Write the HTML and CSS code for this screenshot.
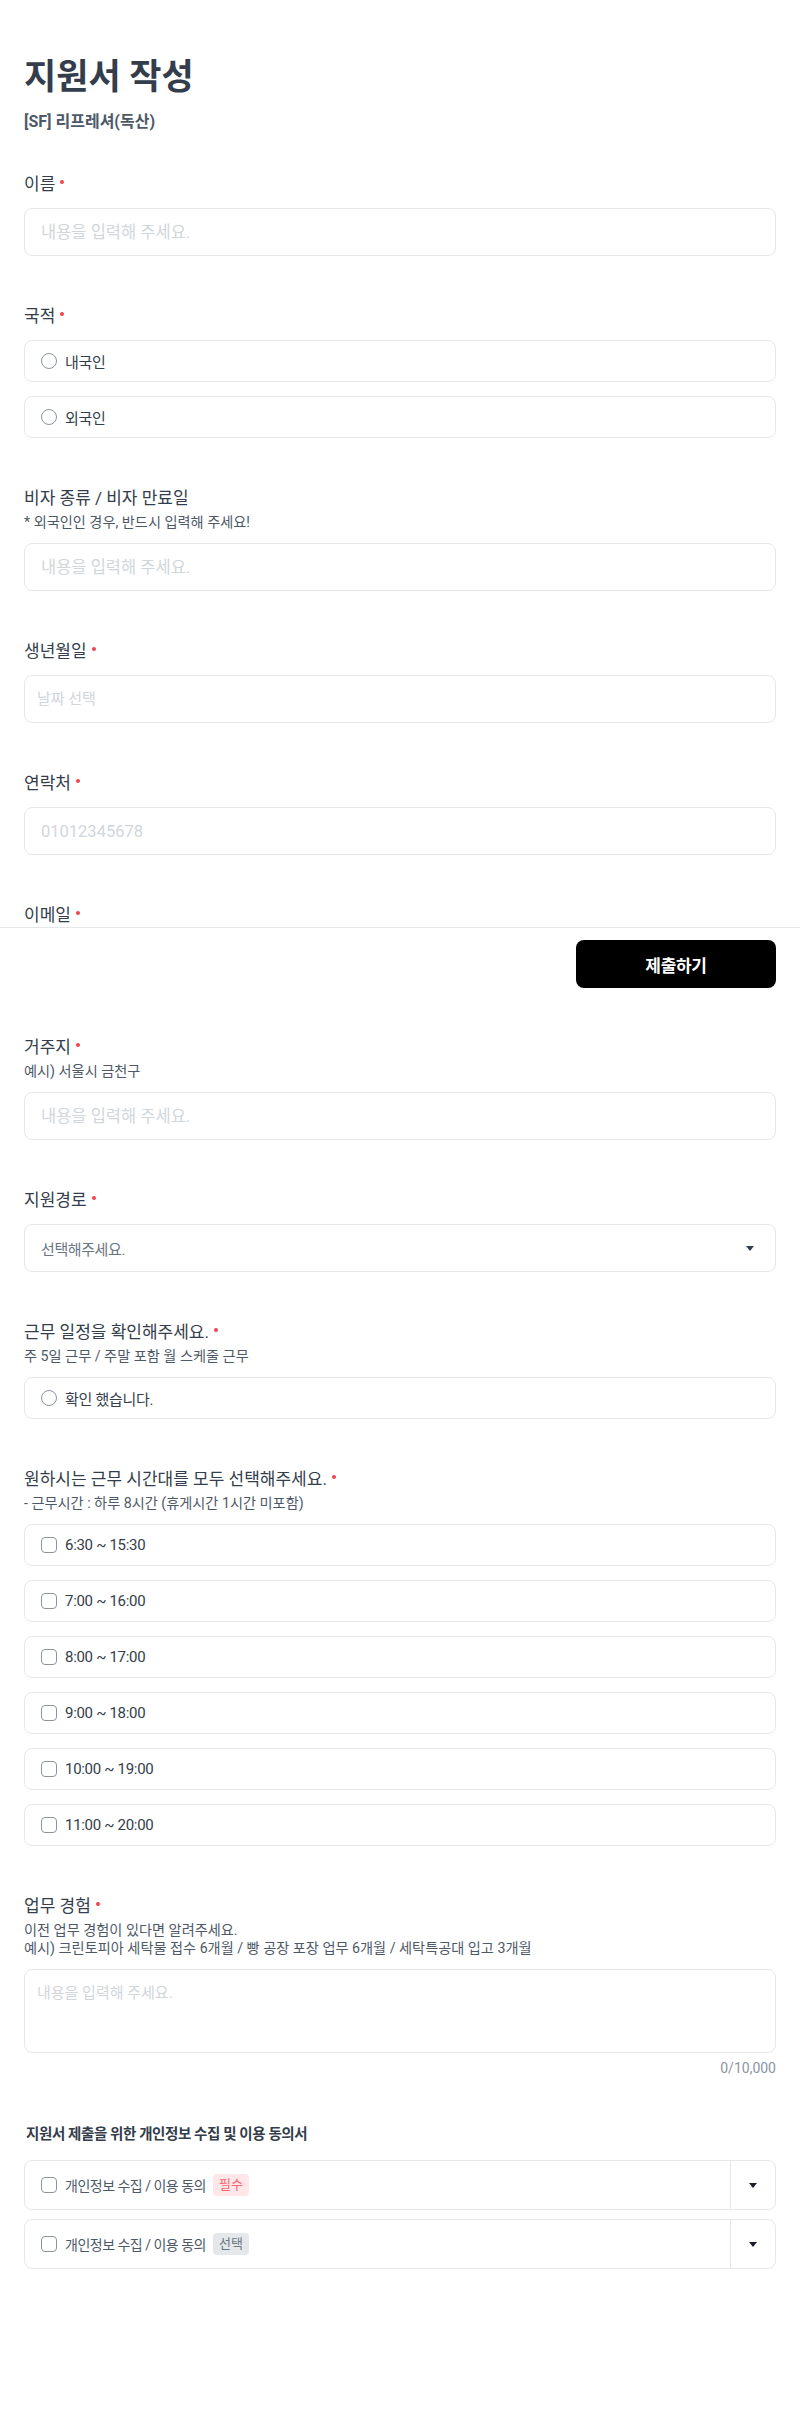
FILE: index.html
```html
<!DOCTYPE html>
<html lang="ko">
<head>
    <meta charset="UTF-8">
    <meta name="viewport" content="width=device-width, initial-scale=1.0">
    <title>지원서 작성</title>
    <link rel="stylesheet" href="styles.css">
</head>
<body>
    <div class="page">
        <header class="page-header">
            <h1 class="page-title">지원서 작성</h1>
            <p class="page-subtitle">[SF] 리프레셔(독산)</p>
        </header>

        <form class="apply-form">
            <div class="field">
                <div class="field-head">
                    <label class="field-label">이름<span class="required"></span></label>
                </div>
                <input type="text" class="text-input" placeholder="내용을 입력해 주세요.">
            </div>

            <div class="field">
                <div class="field-head">
                    <label class="field-label">국적<span class="required"></span></label>
                </div>
                <div class="option-list">
                    <label class="option-item"><span class="radio"></span><span class="option-text">내국인</span></label>
                    <label class="option-item"><span class="radio"></span><span class="option-text">외국인</span></label>
                </div>
            </div>

            <div class="field">
                <div class="field-head">
                    <label class="field-label">비자 종류 / 비자 만료일</label>
                    <p class="field-hint">* 외국인인 경우, 반드시 입력해 주세요!</p>
                </div>
                <input type="text" class="text-input" placeholder="내용을 입력해 주세요.">
            </div>

            <div class="field">
                <div class="field-head">
                    <label class="field-label">생년월일<span class="required"></span></label>
                </div>
                <input type="text" class="text-input date-input" placeholder="날짜 선택">
            </div>

            <div class="field">
                <div class="field-head">
                    <label class="field-label">연락처<span class="required"></span></label>
                </div>
                <input type="text" class="text-input" placeholder="01012345678">
            </div>

            <div class="field">
                <div class="field-head">
                    <label class="field-label">이메일<span class="required"></span></label>
                </div>
                <input type="text" class="text-input" placeholder="내용을 입력해 주세요.">
            </div>

            <div class="field">
                <div class="field-head">
                    <label class="field-label">거주지<span class="required"></span></label>
                    <p class="field-hint">예시) 서울시 금천구</p>
                </div>
                <input type="text" class="text-input" placeholder="내용을 입력해 주세요.">
            </div>

            <div class="field">
                <div class="field-head">
                    <label class="field-label">지원경로<span class="required"></span></label>
                </div>
                <div class="select-box">
                    <span class="select-placeholder">선택해주세요.</span>
                    <svg class="caret" width="8" height="5" viewBox="0 0 8 5"><path d="M0 0h8L4 5z" fill="#333d4b"/></svg>
                </div>
            </div>

            <div class="field">
                <div class="field-head">
                    <label class="field-label">근무 일정을 확인해주세요.<span class="required"></span></label>
                    <p class="field-hint">주 5일 근무 / 주말 포함 월 스케줄 근무</p>
                </div>
                <div class="option-list">
                    <label class="option-item"><span class="radio"></span><span class="option-text">확인 했습니다.</span></label>
                </div>
            </div>

            <div class="field">
                <div class="field-head">
                    <label class="field-label">원하시는 근무 시간대를 모두 선택해주세요.<span class="required"></span></label>
                    <p class="field-hint">- 근무시간 : 하루 8시간 (휴게시간 1시간 미포함)</p>
                </div>
                <div class="option-list">
                    <label class="option-item"><span class="checkbox"></span><span class="option-text">6:30 ~ 15:30</span></label>
                    <label class="option-item"><span class="checkbox"></span><span class="option-text">7:00 ~ 16:00</span></label>
                    <label class="option-item"><span class="checkbox"></span><span class="option-text">8:00 ~ 17:00</span></label>
                    <label class="option-item"><span class="checkbox"></span><span class="option-text">9:00 ~ 18:00</span></label>
                    <label class="option-item"><span class="checkbox"></span><span class="option-text">10:00 ~ 19:00</span></label>
                    <label class="option-item"><span class="checkbox"></span><span class="option-text">11:00 ~ 20:00</span></label>
                </div>
            </div>

            <div class="field">
                <div class="field-head">
                    <label class="field-label">업무 경험<span class="required"></span></label>
                    <p class="field-hint">이전 업무 경험이 있다면 알려주세요.<br>예시) 크린토피아 세탁물 접수 6개월 / 빵 공장 포장 업무 6개월 / 세탁특공대 입고 3개월</p>
                </div>
                <textarea class="text-area" placeholder="내용을 입력해 주세요."></textarea>
                <div class="char-count">0/10,000</div>
            </div>

            <section class="consent-section">
                <h2 class="consent-title">지원서 제출을 위한 개인정보 수집 및 이용 동의서</h2>
                <div class="consent-list">
                    <div class="consent-item">
                        <label class="consent-main">
                            <span class="checkbox"></span>
                            <span class="consent-text">개인정보 수집 / 이용 동의</span>
                            <span class="badge badge-required">필수</span>
                        </label>
                        <button type="button" class="consent-toggle">
                            <svg width="8" height="5" viewBox="0 0 8 5"><path d="M0 0h8L4 5z" fill="#191f28"/></svg>
                        </button>
                    </div>
                    <div class="consent-item">
                        <label class="consent-main">
                            <span class="checkbox"></span>
                            <span class="consent-text">개인정보 수집 / 이용 동의</span>
                            <span class="badge badge-optional">선택</span>
                        </label>
                        <button type="button" class="consent-toggle">
                            <svg width="8" height="5" viewBox="0 0 8 5"><path d="M0 0h8L4 5z" fill="#191f28"/></svg>
                        </button>
                    </div>
                </div>
            </section>
        </form>
    </div>

    <div class="submit-bar">
        <button type="button" class="submit-button">제출하기</button>
    </div>
</body>
</html>
```

FILE: styles.css
```css
* {
    margin: 0;
    padding: 0;
    box-sizing: border-box;
}

body {
    font-family: Roboto, 'Noto Sans CJK KR', sans-serif;
    background: #ffffff;
    color: #333d4b;
    position: relative;
    min-height: 2424px;
}

.page {
    padding: 57px 24px 120px;
}

.page-title {
    font-size: 35px;
    line-height: 42px;
    font-weight: 700;
    color: #333d4b;
}

.page-subtitle {
    margin-top: 11px;
    font-size: 16px;
    line-height: 24px;
    font-weight: 700;
    color: #4e5968;
}

.apply-form {
    margin-top: 38px;
    display: flex;
    flex-direction: column;
    gap: 48px;
}

.field-head {
    margin-bottom: 12px;
}

.field-label {
    display: block;
    font-size: 17px;
    line-height: 24px;
    color: #333d4b;
}

.required {
    display: inline-block;
    width: 4px;
    height: 4px;
    margin-left: 5px;
    margin-top: 8px;
    vertical-align: top;
    border-radius: 50%;
    background: #f04452;
}

.field-hint {
    margin-top: 3px;
    font-size: 14.2px;
    line-height: 18px;
    color: #4e5968;
}

.text-input,
.text-area {
    display: block;
    width: 100%;
    height: 48px;
    padding: 0 16px;
    border: 1px solid #e5e8eb;
    border-radius: 8px;
    background: #ffffff;
    font-family: inherit;
    font-size: 16.5px;
    color: #333d4b;
    outline: none;
}

.text-input::placeholder,
.text-area::placeholder {
    color: #d1d6db;
}

.date-input {
    padding: 0 12px;
    font-size: 15px;
}

.text-area {
    height: 84px;
    padding: 12px;
    font-size: 15px;
    line-height: 22px;
    resize: none;
}

.char-count {
    margin-top: 5px;
    text-align: right;
    font-size: 14px;
    line-height: 20px;
    color: #8b95a1;
}

.select-box {
    display: flex;
    align-items: center;
    justify-content: space-between;
    height: 48px;
    padding: 0 21px 0 16px;
    border: 1px solid #e5e8eb;
    border-radius: 8px;
}

.select-placeholder {
    font-size: 15px;
    color: #6b7684;
    letter-spacing: -0.4px;
}

.option-list {
    display: flex;
    flex-direction: column;
    gap: 14px;
}

.option-item {
    display: flex;
    align-items: center;
    gap: 8px;
    height: 42px;
    padding: 0 16px;
    border: 1px solid #e5e8eb;
    border-radius: 8px;
}

.option-text {
    font-size: 15px;
    color: #333d4b;
    letter-spacing: -0.3px;
}

.radio,
.checkbox {
    flex-shrink: 0;
    width: 16px;
    height: 16px;
    border: 1px solid #8b95a1;
    background: #ffffff;
}

.radio {
    border-radius: 50%;
}

.checkbox {
    border-radius: 4px;
}

.consent-section {
    margin-top: -2px;
}

.consent-title {
    padding-left: 2px;
    font-size: 14.5px;
    line-height: 22px;
    font-weight: 700;
    color: #333d4b;
    letter-spacing: -0.4px;
}

.consent-list {
    margin-top: 14px;
    display: flex;
    flex-direction: column;
    gap: 9px;
}

.consent-item {
    display: flex;
    height: 50px;
    border: 1px solid #e5e8eb;
    border-radius: 8px;
}

.consent-main {
    flex: 1;
    display: flex;
    align-items: center;
    gap: 8px;
    padding: 0 16px;
}

.consent-text {
    font-size: 14px;
    color: #4e5968;
    letter-spacing: -0.5px;
}

.badge {
    margin-left: -1px;
    padding: 0 6px;
    height: 22px;
    line-height: 22px;
    border-radius: 4px;
    font-size: 13px;
}

.badge-required {
    background: #ffe7e9;
    color: #f66570;
}

.badge-optional {
    background: #e5e8eb;
    color: #6b7684;
}

.consent-toggle {
    width: 45px;
    border: none;
    border-left: 1px solid #e5e8eb;
    background: transparent;
    display: flex;
    align-items: center;
    justify-content: center;
    cursor: pointer;
}

.submit-bar {
    position: absolute;
    top: 927px;
    left: 0;
    right: 0;
    display: flex;
    justify-content: flex-end;
    padding: 12px 24px;
    border-top: 1px solid #e5e8eb;
    background: #ffffff;
}

.submit-button {
    width: 200px;
    height: 48px;
    border: none;
    border-radius: 8px;
    background: #000000;
    color: #ffffff;
    font-family: inherit;
    font-size: 17px;
    font-weight: 700;
    letter-spacing: -0.3px;
    cursor: pointer;
}
```
